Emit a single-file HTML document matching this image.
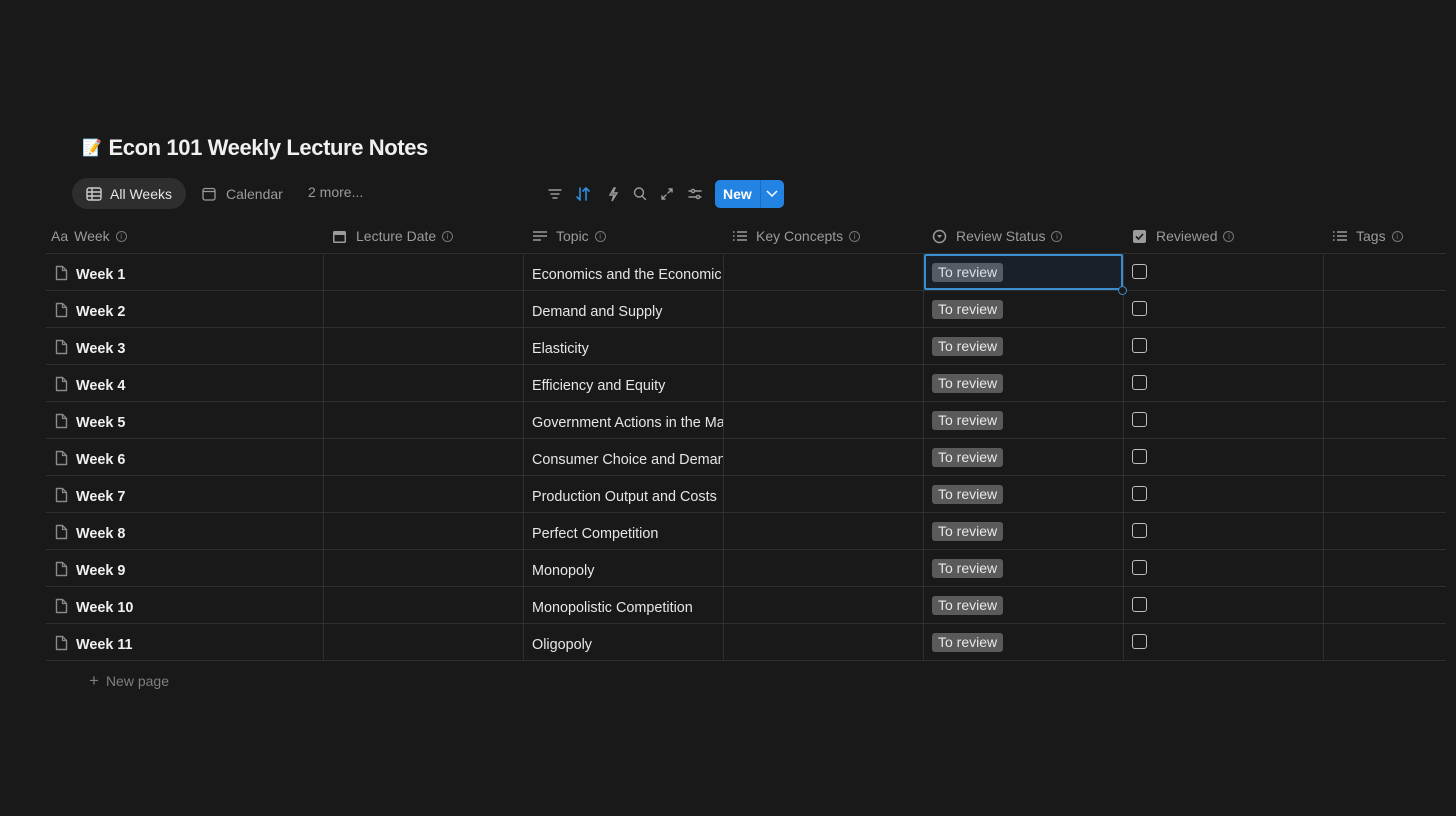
<!DOCTYPE html>
<html><head><meta charset="utf-8"><style>
*{box-sizing:border-box;margin:0;padding:0}
body{width:1456px;height:816px;background:#191919;font-family:"Liberation Sans",sans-serif;color:#d4d4d4;position:relative;overflow:hidden}
.abs{position:absolute}
.title{left:82px;top:135px;font-size:22px;font-weight:bold;color:#f0f0f0;letter-spacing:-0.4px;display:flex;align-items:center}
.tab{top:178px;height:31px;font-size:14px;display:flex;align-items:center;color:#9b9b9b}
.hdr{top:218px;height:36px;font-size:14px;color:#9b9b9b;display:flex;align-items:center}
.info{display:inline-block;width:11px;height:11px;border:1px solid #777;border-radius:50%;margin-left:6px;font-size:8px;line-height:9px;text-align:center;color:#777}
.row{position:absolute;left:46px;width:1400px;height:37px;border-bottom:1px solid #2f2f2f}
.c{position:absolute;top:3px;height:36px;display:flex;align-items:center;font-size:14.4px;color:#e6e6e6}
.vl{position:absolute;top:254px;height:407px;width:1px;background:#2f2f2f}
.wk{left:30px;font-weight:bold;color:#f0f0f0}
.doc{position:absolute;left:8px;top:11px;width:15px;height:16px}
.tag{position:absolute;left:886px;top:9px;height:19px;padding:0 6px;background:#5a5a5a;border-radius:3px;color:#e8e8e8;font-size:14px;line-height:19px}
.cb{position:absolute;left:1086px;top:10px;width:15px;height:15px;border:1.5px solid #bdbdbd;border-radius:3px}
</style></head><body>
<div class="abs title"><span style="font-size:16px;margin-right:7px">📝</span>Econ 101 Weekly Lecture Notes</div>

<div class="abs tab" style="left:72px;width:114px;background:#2e2e2e;border-radius:16px;color:#e6e6e6;padding-left:14px">
<svg width="16" height="14" viewBox="0 0 16 14" style="margin-right:8px"><rect x="1" y="1" width="14" height="12" rx="2" fill="none" stroke="#ccc" stroke-width="1.4"/><path d="M1 5h14M1 9h14M6 1v12" stroke="#ccc" stroke-width="1.4"/></svg>All Weeks</div>
<div class="abs tab" style="left:202px"><svg width="14" height="14" viewBox="0 0 14 14" style="margin-right:10px"><rect x="1" y="1.5" width="12" height="11.5" rx="2" fill="none" stroke="#999" stroke-width="1.3"/><path d="M1 4.5h12" stroke="#999" stroke-width="1.3"/></svg>Calendar</div>
<div class="abs tab" style="left:308px;top:176px">2 more...</div>

<svg class="abs" style="left:546px;top:186px" width="160" height="16" viewBox="0 0 160 16">
<g stroke="#9b9b9b" stroke-width="1.4" fill="none" stroke-linecap="round">
<path d="M3 4h12M5 8h8M7 12h4"/>
<path d="M93 2a4.5 4.5 0 1 1 0 9a4.5 4.5 0 1 1 0-9M96.5 10.5l3 3"/>
<path d="M116 13l4-4M126 3l-4 4M123 3h3v3M116 10v3h3"/>
<path d="M143 5h12M143 11h12"/><circle cx="147" cy="5" r="1.6" fill="#191919"/><circle cx="152" cy="11" r="1.6" fill="#191919"/>
<path d="M68 2l-4 7h4l-2 6 5-8h-4l2-5z"/>
</g>
<g stroke="#2e8ee0" stroke-width="1.6" fill="none" stroke-linecap="round"><path d="M34 2v12M31 11l3 3M40 14V2M37 5l3-3l3 3"/></g>
</svg>
<div class="abs" style="left:715px;top:180px;width:69px;height:28px;background:#2383e2;border-radius:5px;color:#fff;font-size:14px;font-weight:bold;line-height:28px;padding-left:8px">New</div>
<div class="abs" style="left:760px;top:180px;width:1px;height:28px;background:#1a6ec0"></div>
<svg class="abs" style="left:766px;top:189px" width="12" height="10"><path d="M1 2l5 5l5-5" stroke="#fff" stroke-width="1.5" fill="none"/></svg>

<div class="abs" style="left:46px;top:253px;width:1400px;height:1px;background:#2f2f2f"></div>
<div class="abs hdr" style="left:51px"><span style="font-size:14px;margin-right:6px">Aa</span>Week<span class="info">i</span></div>
<div class="abs hdr" style="left:332px"><svg width="15" height="15" style="margin-right:9px"><rect x="1" y="2" width="13" height="12" rx="1.5" fill="#9b9b9b"/><rect x="2.5" y="6" width="10" height="6.5" fill="#191919"/></svg>Lecture Date<span class="info">i</span></div>
<div class="abs hdr" style="left:532px"><svg width="16" height="14" style="margin-right:8px"><path d="M1 3h14M1 7h14M1 11h8" stroke="#9b9b9b" stroke-width="1.5"/></svg>Topic<span class="info">i</span></div>
<div class="abs hdr" style="left:732px"><svg width="16" height="14" style="margin-right:8px"><path d="M5 3h10M5 7h10M5 11h10M1 3h1.5M1 7h1.5M1 11h1.5" stroke="#9b9b9b" stroke-width="1.5"/></svg>Key Concepts<span class="info">i</span></div>
<div class="abs hdr" style="left:932px"><svg width="15" height="15" style="margin-right:9px"><circle cx="7.5" cy="7.5" r="6" fill="none" stroke="#9b9b9b" stroke-width="1.5"/><path d="M5 6h5l-2.5 3z" fill="#9b9b9b"/></svg>Review Status<span class="info">i</span></div>
<div class="abs hdr" style="left:1132px"><svg width="15" height="15" style="margin-right:9px"><rect x="1" y="1" width="13" height="13" rx="2" fill="#9b9b9b"/><path d="M4 7.5l2.5 2.5l4.5-5" stroke="#191919" stroke-width="1.6" fill="none"/></svg>Reviewed<span class="info">i</span></div>
<div class="abs hdr" style="left:1332px"><svg width="16" height="14" style="margin-right:8px"><path d="M5 3h10M5 7h10M5 11h10M1 3h1.5M1 7h1.5M1 11h1.5" stroke="#9b9b9b" stroke-width="1.5"/></svg>Tags<span class="info">i</span></div>

<div class="vl" style="left:323px"></div><div class="vl" style="left:523px"></div><div class="vl" style="left:723px"></div><div class="vl" style="left:923px"></div><div class="vl" style="left:1123px"></div><div class="vl" style="left:1323px"></div>

<svg width="0" height="0" style="position:absolute"><defs><symbol id="d" viewBox="0 0 15 16"><path d="M2.5 1.5h6l4 4v9h-10z" fill="none" stroke="#8a8a8a" stroke-width="1.4" stroke-linejoin="round"/><path d="M8.5 1.5v4h4" fill="none" stroke="#8a8a8a" stroke-width="1.2"/></symbol></defs></svg>

<div class="row" style="top:254px"><svg class="doc"><use href="#d"/></svg><div class="c wk">Week 1</div><div class="c" style="left:486px;width:191px;overflow:hidden;white-space:nowrap">Economics and the Economic</div><div class="tag">To review</div><div class="cb"></div></div>
<div class="row" style="top:291px"><svg class="doc"><use href="#d"/></svg><div class="c wk">Week 2</div><div class="c" style="left:486px">Demand and Supply</div><div class="tag">To review</div><div class="cb"></div></div>
<div class="row" style="top:328px"><svg class="doc"><use href="#d"/></svg><div class="c wk">Week 3</div><div class="c" style="left:486px">Elasticity</div><div class="tag">To review</div><div class="cb"></div></div>
<div class="row" style="top:365px"><svg class="doc"><use href="#d"/></svg><div class="c wk">Week 4</div><div class="c" style="left:486px">Efficiency and Equity</div><div class="tag">To review</div><div class="cb"></div></div>
<div class="row" style="top:402px"><svg class="doc"><use href="#d"/></svg><div class="c wk">Week 5</div><div class="c" style="left:486px;width:191px;overflow:hidden;white-space:nowrap">Government Actions in the Markets</div><div class="tag">To review</div><div class="cb"></div></div>
<div class="row" style="top:439px"><svg class="doc"><use href="#d"/></svg><div class="c wk">Week 6</div><div class="c" style="left:486px;width:191px;overflow:hidden;white-space:nowrap">Consumer Choice and Demand</div><div class="tag">To review</div><div class="cb"></div></div>
<div class="row" style="top:476px"><svg class="doc"><use href="#d"/></svg><div class="c wk">Week 7</div><div class="c" style="left:486px;width:191px;overflow:hidden;white-space:nowrap">Production Output and Costs</div><div class="tag">To review</div><div class="cb"></div></div>
<div class="row" style="top:513px"><svg class="doc"><use href="#d"/></svg><div class="c wk">Week 8</div><div class="c" style="left:486px">Perfect Competition</div><div class="tag">To review</div><div class="cb"></div></div>
<div class="row" style="top:550px"><svg class="doc"><use href="#d"/></svg><div class="c wk">Week 9</div><div class="c" style="left:486px">Monopoly</div><div class="tag">To review</div><div class="cb"></div></div>
<div class="row" style="top:587px"><svg class="doc"><use href="#d"/></svg><div class="c wk">Week 10</div><div class="c" style="left:486px">Monopolistic Competition</div><div class="tag">To review</div><div class="cb"></div></div>
<div class="row" style="top:624px"><svg class="doc"><use href="#d"/></svg><div class="c wk">Week 11</div><div class="c" style="left:486px">Oligopoly</div><div class="tag">To review</div><div class="cb"></div></div>

<div class="abs" style="left:924px;top:254px;width:199px;height:36px;border:2px solid #3a8ed0;border-radius:2px;background:rgba(35,131,226,0.07)"></div>
<div class="abs" style="left:1118px;top:286px;width:9px;height:9px;border:1.5px solid #3a8ed0;border-radius:50%;background:#191919"></div>

<div class="abs" style="left:89px;top:671px;font-size:14px;color:#7f7f7f"><span style="font-size:17px;margin-right:7px">+</span>New page</div>
</body></html>
